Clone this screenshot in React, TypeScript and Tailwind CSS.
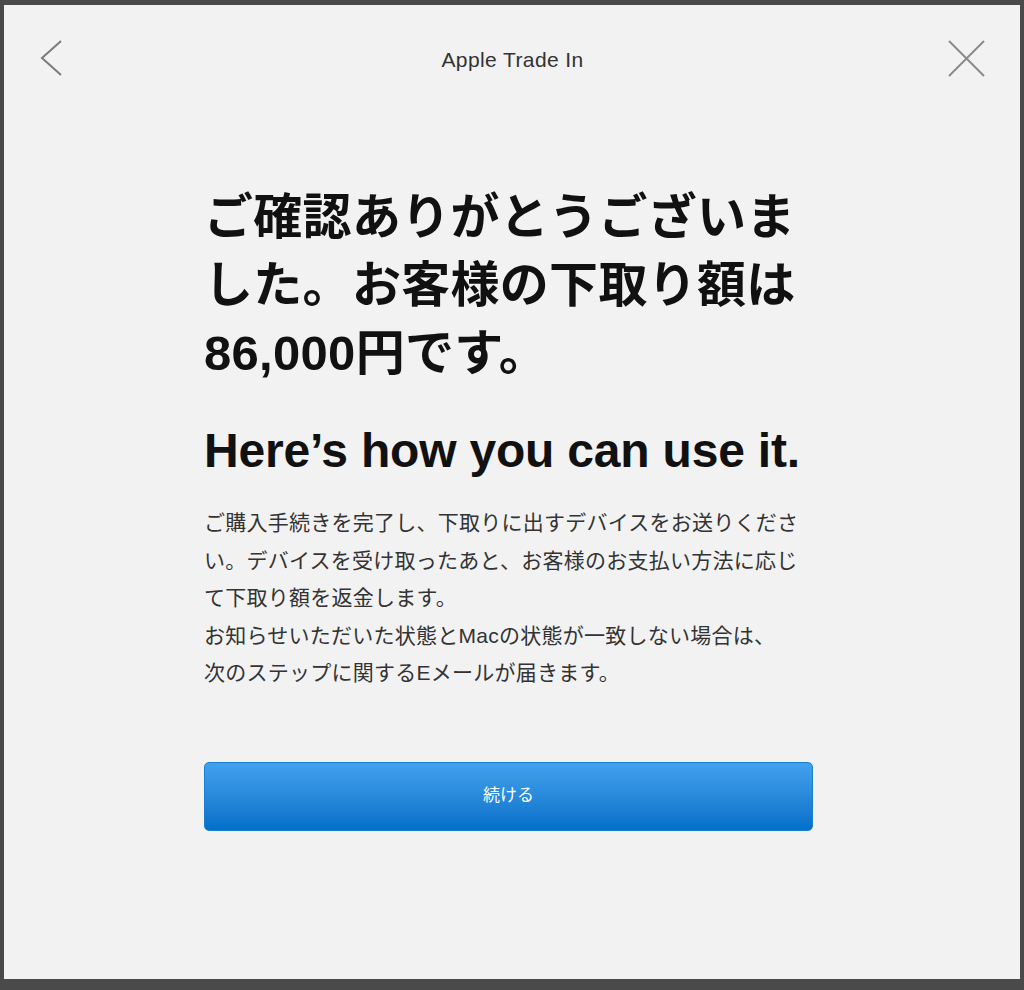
const jp = "font-['Liberation_Sans','Noto_Sans_CJK_JP',sans-serif]";

function BackIcon() {
  return (
    <svg width="24" height="38" viewBox="0 0 24 38" fill="none">
      <polyline points="21,2 2,19 21,36" stroke="#7b7b7b" strokeWidth="2" />
    </svg>
  );
}

function CloseIcon() {
  return (
    <svg width="38" height="38" viewBox="0 0 38 38" fill="none">
      <line x1="2" y1="2" x2="37" y2="37" stroke="#8a8a8a" strokeWidth="2" />
      <line x1="37" y1="2" x2="2" y2="37" stroke="#8a8a8a" strokeWidth="2" />
    </svg>
  );
}

export default function App() {
  return (
    <div className={`h-[990px] w-[1024px] bg-[#4a4a4a] pt-[5px] pl-[4px] pr-[4px] pb-[11px] ${jp}`}>
      <div className="h-full bg-[#f2f2f2]">
        {/* Header */}
        <div className="flex items-center pt-[34px] pl-[36px] pr-[35px]">
          <div className="flex w-[38px] justify-start">
            <BackIcon />
          </div>
          <div className="mt-[4px] flex-1 text-center text-[21px] tracking-[0.4px] text-[#333]">Apple Trade In</div>
          <div className="flex w-[38px] justify-end">
            <CloseIcon />
          </div>
        </div>

        {/* Content */}
        <div className="ml-[200px] mt-[106px] w-[610px]">
          <h1 className="text-[49px] font-bold leading-[68px] tracking-[0.3px] text-[#111]">
            ご確認ありがとうございました。お客様の下取り額は86,000円です。
          </h1>
          <h2 className="mt-[36px] text-[48px] font-bold leading-[56px] tracking-[-0.2px] text-[#111]">
            Here’s how you can use it.
          </h2>
          <p className="mt-[25px] w-[605px] text-[21px] leading-[37.5px] tracking-[0.25px] text-[#333]">
            ご購入手続きを完了し、下取りに出すデバイスをお送りください。デバイスを受け取ったあと、お客様のお支払い方法に応じて下取り額を返金します。
            <br />
            お知らせいただいた状態とMacの状態が一致しない場合は、
            <br />
            次のステップに関するEメールが届きます。
          </p>
          <button className="mt-[70px] flex h-[69px] w-[609px] items-center justify-center rounded-[5px] border border-[#1a7fd4] bg-gradient-to-b from-[#43a2ed] to-[#0070c9] text-[17px] text-white">
            続ける
          </button>
        </div>
      </div>
    </div>
  );
}
